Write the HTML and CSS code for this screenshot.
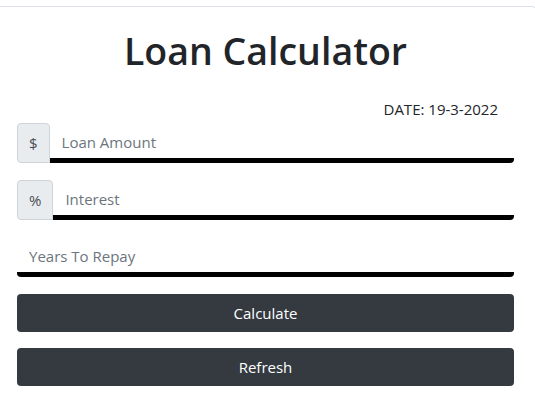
FILE: index.html
```html
<!DOCTYPE html>
<html lang="en">
<head>
  <meta charset="UTF-8" />
  <meta name="viewport" content="width=device-width, initial-scale=1.0"/>
  <title>Loan Calculator</title>
  <link rel="stylesheet" href="styles.css">
</head>

<body>
  <div class="card">
    <h1>Loan Calculator</h1>
    <p class="date">DATE: 19-3-2022</p>

    <div class="input-group">
      <span class="addon">$</span>
      <input type="text" class="field" placeholder="Loan Amount">
    </div>

    <div class="input-group">
      <span class="addon">%</span>
      <input type="text" class="field" placeholder="Interest">
    </div>

    <div class="input-group">
      <input type="text" class="field solo" placeholder="Years To Repay">
    </div>

    <button class="btn">Calculate</button>
    <button class="btn">Refresh</button>
  </div>
</body>
</html>
```

FILE: styles.css
```css
* {
  margin: 0;
  padding: 0;
  box-sizing: border-box;
  font-family: 'Open Sans', 'Noto Sans', sans-serif;
}

body {
  background: white;
  color: #212529;
  overflow: hidden;
}

.card {
  margin-top: 6px;
  width: 539px;
  border: 1px solid #dee2e6;
  border-left: none;
  border-bottom: none;
  border-top-right-radius: 8px;
  padding: 20px 24px 16px 17px;
  display: flex;
  flex-direction: column;
}

h1 {
  text-align: center;
  font-size: 37.5px;
  font-weight: 600;
  line-height: 48px;
  margin-bottom: 24px;
}

.date {
  text-align: right;
  font-size: 15px;
  line-height: 20px;
  padding-right: 16px;
  margin-bottom: 4px;
}

.input-group {
  display: flex;
  height: 40px;
  margin-bottom: 17px;
}

.addon {
  display: flex;
  align-items: center;
  justify-content: center;
  padding: 0 11px;
  background: #e9ecef;
  border: 1px solid #ced4da;
  border-radius: 4px;
  border-bottom-right-radius: 0;
  font-size: 15px;
  color: #495057;
}

.field {
  flex: 1;
  min-width: 0;
  border: none;
  border-bottom: 5px solid black;
  border-bottom-right-radius: 4px;
  padding: 0 12px;
  padding-top: 2px;
  font-size: 15px;
  color: #495057;
  outline: none;
  background: white;
}

.field.solo {
  border-bottom-left-radius: 4px;
}

.field::placeholder {
  color: #6c757d;
}

.btn {
  height: 38px;
  background: #343a40;
  color: white;
  border: none;
  border-radius: 4px;
  font-size: 15px;
  cursor: pointer;
  margin-bottom: 16px;
}

.btn:hover {
  background: #23272b;
}
```
